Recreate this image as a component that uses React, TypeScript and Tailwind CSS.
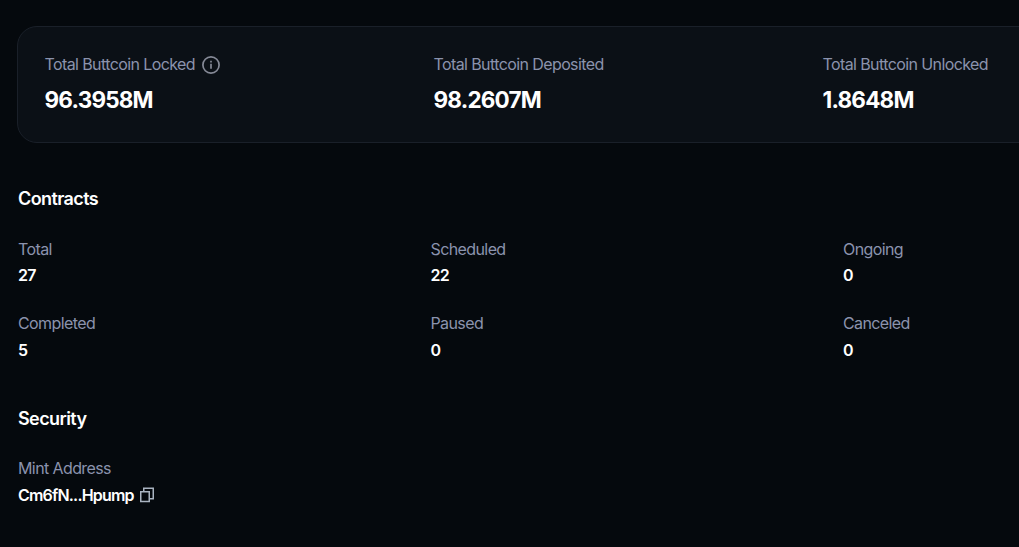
import type { ReactNode } from "react";

type Item = { label: string; value: string };

const totals: (Item & { info?: boolean })[] = [
  { label: "Total Buttcoin Locked", value: "96.3958M", info: true },
  { label: "Total Buttcoin Deposited", value: "98.2607M" },
  { label: "Total Buttcoin Unlocked", value: "1.8648M" },
];

const contracts: Item[] = [
  { label: "Total", value: "27" },
  { label: "Scheduled", value: "22" },
  { label: "Ongoing", value: "0" },
  { label: "Completed", value: "5" },
  { label: "Paused", value: "0" },
  { label: "Canceled", value: "0" },
];

function InfoIcon() {
  return (
    <svg width="20" height="20" viewBox="0 0 20 20" fill="none" stroke="#858996" strokeWidth="1.7">
      <circle cx="10" cy="11" r="8.1" />
      <path d="M10 9.8v5M10 6.8v1.7" />
    </svg>
  );
}

function CopyIcon() {
  return (
    <svg width="16" height="16" viewBox="0 0 16 16" fill="none" stroke="#a9b3c0" strokeWidth="1.5">
      <path d="M1.75 4.75h8.5v9.7h-8.5z" />
      <path d="M4.75 4.5V1.35h9.5v10.4h-3.7" />
    </svg>
  );
}

function Field({ label, children }: { label: string; children: ReactNode }) {
  return (
    <div>
      <div className="text-base leading-6 tracking-[-0.6px] text-[#8b93ad]">{label}</div>
      <div className="mt-[2.4px] flex items-center text-base leading-6 font-semibold tracking-[-0.7px] text-white">
        {children}
      </div>
    </div>
  );
}

export default function App() {
  return (
    <div className="h-[547px] w-full overflow-hidden bg-[#05090d] pt-[26px] pl-[17px] font-['Inter',sans-serif]">
      <div className="grid h-[117px] w-[1222px] grid-cols-[389px_389px_389px] rounded-[20px] border border-[#1a2029] bg-[#0b1016] pt-[25px] pl-[26.5px]">
        {totals.map((item) => (
          <div key={item.label}>
            <div className="flex h-6 items-center gap-1.5 text-base tracking-[-0.6px] text-[#8b93ad]">
              {item.label}
              {item.info && <InfoIcon />}
            </div>
            <div className="mt-2 text-[22.5px] leading-8 font-bold tracking-[-0.8px] text-white">{item.value}</div>
          </div>
        ))}
      </div>

      <div className="pl-px">
        <h2 className="mt-[42px] text-lg leading-7 font-semibold tracking-[-0.6px] text-white">Contracts</h2>
        <div className="mt-6 grid grid-cols-[412.5px_412.5px_412.5px] gap-y-[23.9px]">
          {contracts.map((item) => (
            <Field key={item.label} label={item.label}>
              {item.value}
            </Field>
          ))}
        </div>

        <h2 className="mt-[43.3px] text-lg leading-7 font-semibold tracking-[-0.6px] text-white">Security</h2>
        <div className="mt-[23.4px]">
          <Field label="Mint Address">
            <span className="mr-[5px] tracking-[-0.8px]">Cm6fN...Hpump</span>
            <CopyIcon />
          </Field>
        </div>
      </div>
    </div>
  );
}
